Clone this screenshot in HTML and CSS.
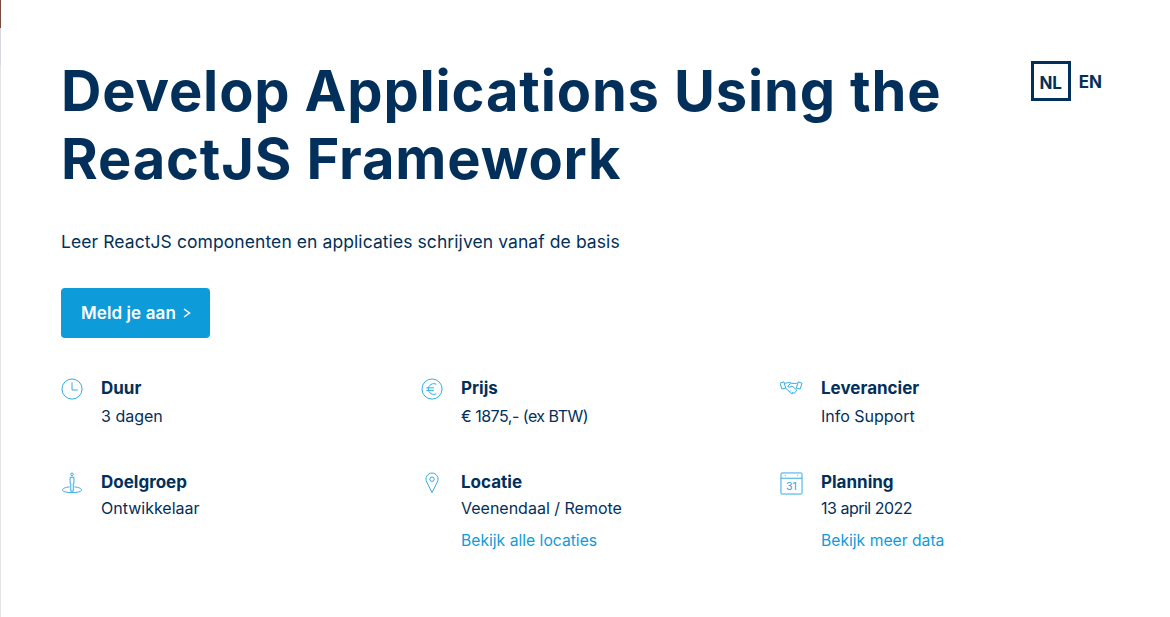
FILE: index.html
```html
<!DOCTYPE html>
<html lang="nl">
<head>
  <meta charset="UTF-8" />
  <title>Develop Applications Using the ReactJS Framework</title>
  <link rel="stylesheet" href="styles.css">
</head>
<body>
  <div class="edge"></div>

  <main class="page">
    <div class="lang">
      <a class="lang-item lang-active">NL</a>
      <a class="lang-item">EN</a>
    </div>

    <h1 class="title">Develop Applications Using the ReactJS Framework</h1>
    <p class="lead">Leer ReactJS componenten en applicaties schrijven vanaf de basis</p>

    <a class="cta">Meld je aan
      <svg class="cta-arrow" viewBox="0 0 8 10" width="8" height="10"><path d="M1 1l5.500 4-5.500 4" fill="none" stroke="#fff" stroke-width="1.500"/></svg>
    </a>

    <div class="facts">
      <div class="fact">
        <svg class="icon" viewBox="0 0 24 24"><circle cx="11.500" cy="11.500" r="10.500"/><path d="M11.500 4.500v8h6"/></svg>
        <div>
          <h3>Duur</h3>
          <p>3 dagen</p>
        </div>
      </div>
      <div class="fact">
        <svg class="icon" viewBox="0 0 24 24"><circle cx="11.500" cy="11.500" r="10.500"/><path d="M16 6.600a5.600 5.600 0 1 0 0 9.800M5.500 10.300h8M5.500 12.900h8"/></svg>
        <div>
          <h3>Prijs</h3>
          <p class="num">€ 1875,- (ex BTW)</p>
        </div>
      </div>
      <div class="fact">
        <svg class="icon icon-wide" viewBox="0 0 24 24"><path d="M0 5.500l4-1.500 2 6.500-4 1zM23 5.500l-4-1.500-2 6.500 4 1zM5 5.500c2-.3 4-1 6-.5l1.500.5c1.500.3 3 .3 5 0M11.500 5.500L8 8.500c.5 1.300 2.200 1.300 3.500.5l1-.7 4.500 3.700M6 10.500l5.500 5.500c1 .8 2.200.3 2.200-.5l.8.300c1 .1 1.700-.7 1.400-1.500 1 0 1.800-1 1.100-2.300M10 14.500l1.500-1.500M12 16l1.500-1.500"/></svg>
        <div>
          <h3>Leverancier</h3>
          <p>Info Support</p>
        </div>
      </div>
      <div class="fact fact-low">
        <svg class="icon" viewBox="0 0 24 24"><circle cx="11.500" cy="2.500" r="1.400"/><path d="M9.500 5.500h4v6.500h-.7v8h-2.600v-8h-.7zM9 15.500c-4.500.5-7.500 1.700-7.500 3.200 0 1.700 4.500 2.800 10 2.800s10-1.100 10-2.800c0-1.500-3-2.700-7.500-3.200"/></svg>
        <div>
          <h3>Doelgroep</h3>
          <p>Ontwikkelaar</p>
        </div>
      </div>
      <div class="fact fact-low">
        <svg class="icon" viewBox="0 0 24 24"><path d="M11.500 21.500L6 10.500a6.300 6.300 0 1 1 11 0z"/><circle cx="11.500" cy="7.500" r="2.300"/></svg>
        <div>
          <h3>Locatie</h3>
          <p>Veenendaal / Remote</p>
          <a class="more">Bekijk alle locaties</a>
        </div>
      </div>
      <div class="fact fact-low">
        <svg class="icon icon-wide" viewBox="0 0 24 24"><rect x="1" y="1" width="22" height="22" rx="1"/><path d="M1 6.500h22M5 3.500h1M18 3.500h1"/><text x="12" y="19" class="icon-text">31</text></svg>
        <div>
          <h3>Planning</h3>
          <p class="num">13 april 2022</p>
          <a class="more">Bekijk meer data</a>
        </div>
      </div>
    </div>
  </main>
</body>
</html>
```

FILE: styles.css
```css
html, body {
  margin: 0;
  height: 100%;
  overflow: hidden;
}
body {
  font-family: "Inter", "Liberation Sans", sans-serif;
  background: #fff;
  color: #03305a;
}
.edge {
  position: absolute;
  left: 0;
  top: 0;
  width: 1px;
  height: 617px;
  background: linear-gradient(#7a4a3c 0, #7a4a3c 28px, #d9d6e4 28px, #d9d6e4 65px, #e4e4e4 65px);
}
.page {
  position: relative;
  padding: 57px 61px 0;
}
.lang {
  position: absolute;
  top: 60px;
  right: 68px;
  display: flex;
  align-items: center;
  gap: 8px;
  font-weight: 700;
  font-size: 17px;
}
.lang-item {
  display: block;
  line-height: 40px;
  padding-top: 2px;
}
.lang-active {
  width: 34px;
  height: 34px;
  padding-top: 0;
  border: 3px solid #03305a;
  text-align: center;
  line-height: 38px;
}
.title {
  margin: 0;
  width: 900px;
  font-size: 56px;
  line-height: 68px;
  font-weight: 700;
  letter-spacing: .85px;
}
.lead {
  margin: 36px 0 0;
  font-size: 17.500px;
  line-height: 26px;
  letter-spacing: .08px;
}
.cta {
  display: inline-flex;
  align-items: center;
  gap: 7px;
  margin-top: 33px;
  height: 50px;
  padding: 0 19px 0 20px;
  border-radius: 4px;
  background: #0e9bda;
  color: #fff;
  font-weight: 600;
  font-size: 17px;
  letter-spacing: .1px;
}
.facts {
  display: grid;
  grid-template-columns: repeat(3, 360px);
  grid-auto-rows: 94px;
  margin-top: 38px;
}
.fact {
  display: flex;
  gap: 17px;
}
.icon {
  flex: none;
  width: 23px;
  height: 23px;
  margin-top: 2px;
  fill: none;
  stroke: #2aa8e2;
  stroke-width: 1;
}
.icon-wide {
  margin-left: -1px;
  margin-right: 1px;
}
.icon-text {
  fill: #2aa8e2;
  stroke: none;
  font-size: 11px;
  text-anchor: middle;
}
.fact h3 {
  margin: 0;
  font-size: 17px;
  line-height: 24px;
  font-weight: 700;
}
.fact p {
  margin: 3px 0 0;
  font-size: 16px;
  line-height: 26px;
}
.fact-low p {
  margin-top: 1px;
}
.fact .num {
  letter-spacing: -.5px;
}
.more {
  display: block;
  margin-top: 7px;
  font-size: 15.700px;
  line-height: 26px;
  color: #0e9bda;
}
```
